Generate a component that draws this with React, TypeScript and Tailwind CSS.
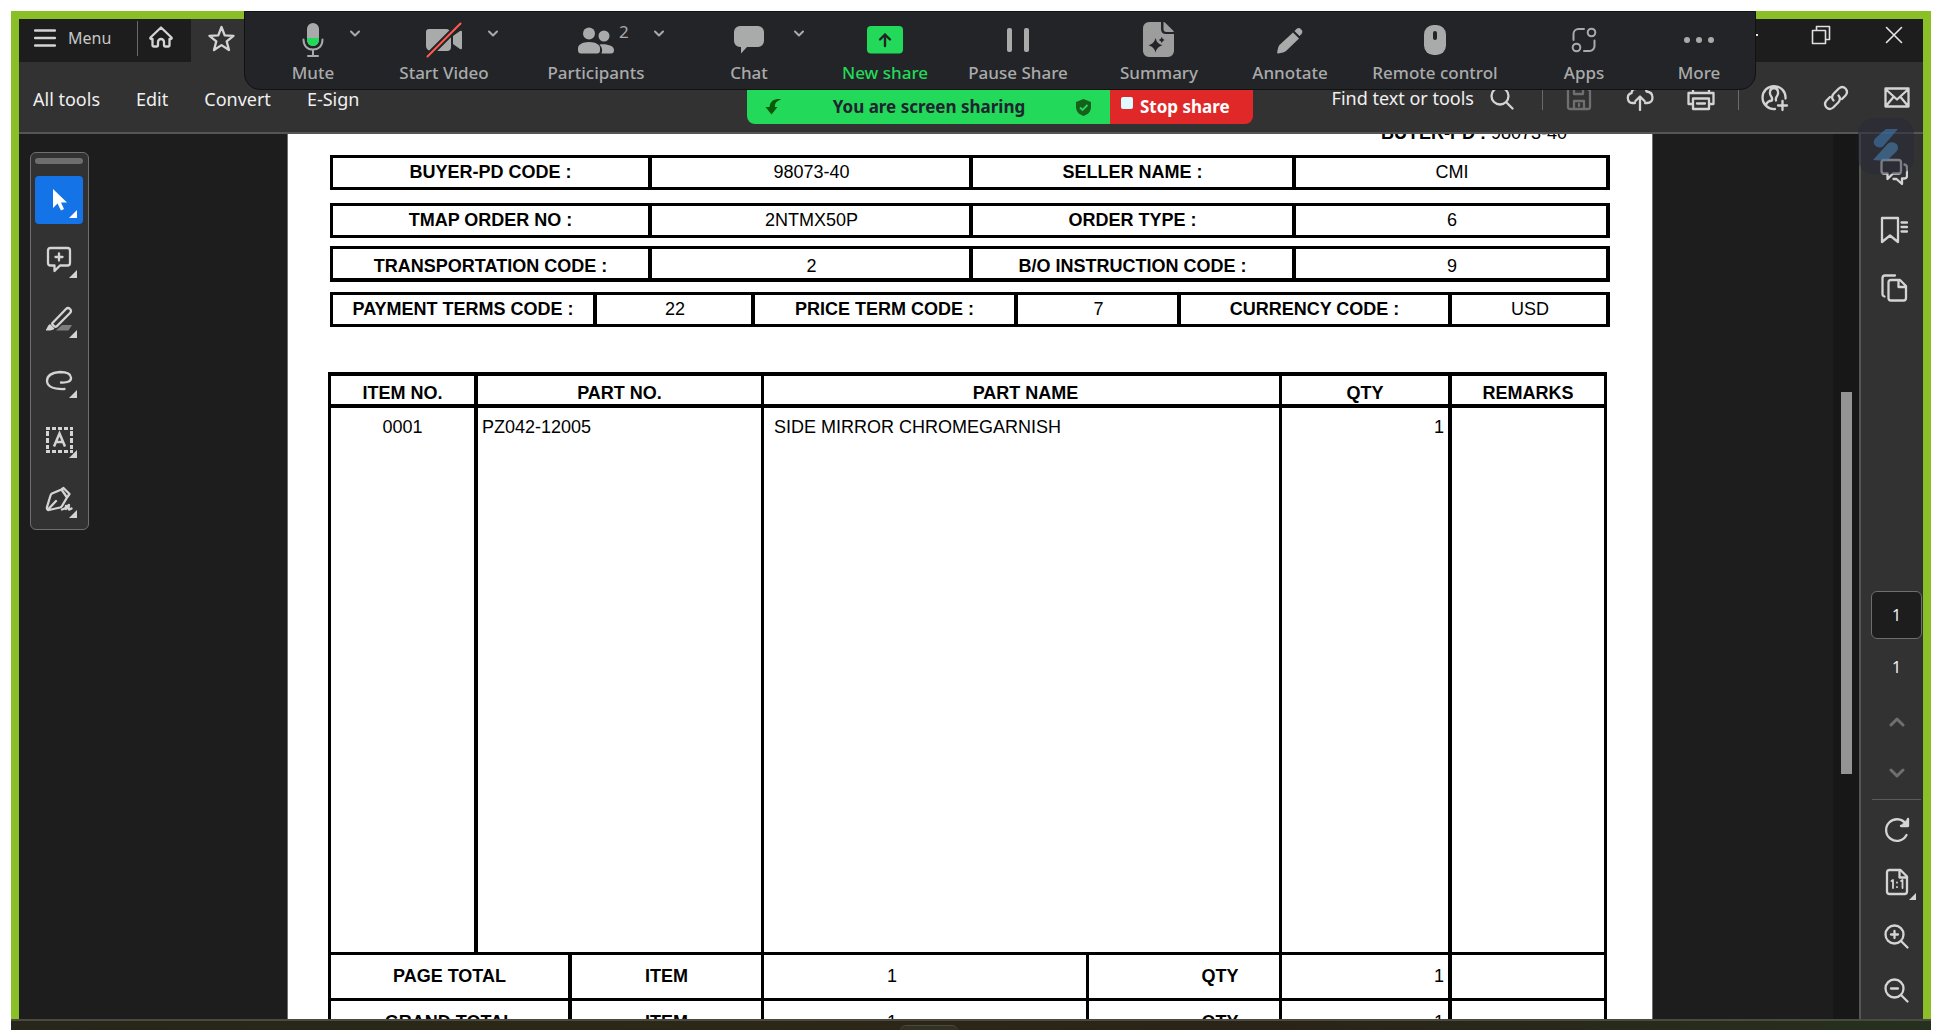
import type { ReactNode } from "react";

const GREY = "#a9abab";
const LIGHT = "#d4d4d4";

function Svg({ w, h, children, className = "" }: { w: number; h: number; children: ReactNode; className?: string }) {
  return (
    <svg width={w} height={h} viewBox={`0 0 ${w} ${h}`} fill="none" className={`block shrink-0 ${className}`} aria-hidden="true">
      {children}
    </svg>
  );
}

function Line({ w, h, children, color = LIGHT, sw = 2.3 }: { w: number; h: number; children: ReactNode; color?: string; sw?: number }) {
  return (
    <Svg w={w} h={h}>
      <g stroke={color} strokeWidth={sw} strokeLinecap="round" strokeLinejoin="round">
        {children}
      </g>
    </Svg>
  );
}

/* ---------- meeting toolbar ---------- */

const MicIcon = () => (
  <Svg w={22} h={36}>
    <rect x="5" y="1" width="12" height="23" rx="6" fill={GREY} />
    <path d="M5 16h12v2a6 6 0 0 1-12 0z" fill="#23d959" />
    <path d="M1.500 17.500c0 6.500 4 10 9.500 10s9.500-3.500 9.500-10M11 27.500V34M6 34h10" stroke={GREY} strokeWidth="2" strokeLinecap="round" />
  </Svg>
);
const VideoIcon = () => (
  <Svg w={38} h={36}>
    <path d="M1 10a3 3 0 0 1 3-3h17a5 5 0 0 1 5 5v13a4 4 0 0 1-4 4H6a5 5 0 0 1-5-5z" fill={GREY} />
    <path d="M28 14l7-5q2-1 2 1v16q0 2-2 1l-7-5z" fill={GREY} />
    <path d="M2 35L36 1" stroke="#232427" strokeWidth="6" />
    <path d="M2.500 34.500L35.500 1.500" stroke="#ff5b50" strokeWidth="2" strokeLinecap="round" />
  </Svg>
);
const PeopleIcon = () => (
  <Svg w={38} h={36}>
    <circle cx="12" cy="11.500" r="6" fill={GREY} />
    <circle cx="27" cy="14" r="5.500" fill={GREY} />
    <path d="M1 26c0-3 4-6 11-6s11 3 11 6v2q0 3.500-3 3.500H4q-3 0-3-3.500z" fill={GREY} />
    <path d="M22.500 22.500c8-.8 14.500 1.500 14.500 5.500q0 3.500-3 3.500h-9.500q2-4.500-2-9z" fill={GREY} />
  </Svg>
);
const ChatIcon = () => (
  <Svg w={30} h={36}>
    <path d="M6 4h18a6 6 0 0 1 6 6v9a6 6 0 0 1-6 6H13l-6 6.500V25H6a6 6 0 0 1-6-6v-9a6 6 0 0 1 6-6z" fill={GREY} />
  </Svg>
);
const ShareIcon = () => (
  <Svg w={36} h={36}>
    <rect y="4" width="36" height="27.500" rx="4" fill="#23d959" />
    <path d="M18 24V12.500M13 17.500l5-5 5 5" stroke="#232427" strokeWidth="2.400" strokeLinecap="round" strokeLinejoin="round" />
  </Svg>
);
const PauseIcon = () => (
  <Svg w={22} h={36}>
    <rect x="0" y="6" width="5" height="24" rx="2" fill={GREY} />
    <rect x="17" y="6" width="5" height="24" rx="2" fill={GREY} />
  </Svg>
);
const SummaryIcon = () => (
  <Svg w={32} h={36}>
    <path d="M6 0h12v7q0 5 5 5h8v17a6 6 0 0 1-6 6H6a6 6 0 0 1-6-6V6a6 6 0 0 1 6-6z" fill="#9d9d9d" />
    <path d="M20.500 0q1 0 2 1l7.500 7.500q1 1 .8 1.500h-7.300q-3 0-3-3z" fill="#9d9d9d" />
    <path d="M12.500 16q1.500 6 7 7.300-5.500 1.200-7 7.200-1.500-6-7-7.200 5.500-1.300 7-7.300zM18.700 15q.8 2.300 3 3-2.200.7-3 3-.8-2.300-3-3 2.200-.7 3-3z" fill="#232427" />
  </Svg>
);
const PencilIcon = () => (
  <Svg w={26} h={36}>
    <path d="M16 10.500l6 6L9 29q-2 1.500-8 2.500-1 0-.8-1Q1 24 3 22.500zM17.500 9l2-2q2.300-2 4.500.2 2.500 2.300.5 4.800l-2 2z" fill={GREY} />
  </Svg>
);
const MouseIcon = () => (
  <Svg w={22} h={36}>
    <rect x="0" y="3" width="22" height="30" rx="9.500" fill={GREY} />
    <rect x="9" y="9" width="4" height="9" rx="2" fill="#232427" />
  </Svg>
);
const AppsIcon = () => (
  <Svg w={26} h={36}>
    <g stroke={GREY} strokeWidth="2" strokeLinecap="round">
      <circle cx="20.500" cy="10.500" r="3.800" />
      <circle cx="5.500" cy="25.500" r="3.800" />
      <path d="M13 7H7.500a5 5 0 0 0-5 5v6M13 29h5.500a5 5 0 0 0 5-5v-5.500" />
    </g>
  </Svg>
);
const MoreIcon = () => (
  <Svg w={30} h={36}>
    <circle cx="3" cy="18" r="3" fill={GREY} />
    <circle cx="15" cy="18" r="3" fill={GREY} />
    <circle cx="27" cy="18" r="3" fill={GREY} />
  </Svg>
);

type Tool = { label: string; icon: ReactNode; caret?: string; count?: string; active?: boolean };
const meetingTools: Tool[] = [
  { label: "Mute", icon: <MicIcon />, caret: "ml-9" },
  { label: "Start Video", icon: <VideoIcon />, caret: "ml-[43px]" },
  { label: "Participants", icon: <PeopleIcon />, caret: "ml-[23px]", count: "2" },
  { label: "Chat", icon: <ChatIcon />, caret: "ml-11" },
  { label: "New share", icon: <ShareIcon />, active: true },
  { label: "Pause Share", icon: <PauseIcon /> },
  { label: "Summary", icon: <SummaryIcon /> },
  { label: "Annotate", icon: <PencilIcon /> },
  { label: "Remote control", icon: <MouseIcon /> },
  { label: "Apps", icon: <AppsIcon /> },
  { label: "More", icon: <MoreIcon /> },
];

function MeetingTool({ label, icon, caret, count, active }: Tool) {
  return (
    <div className="grid min-w-0 grid-cols-2 content-start">
      <button
        className={
          "col-span-2 col-start-1 row-start-1 grid grid-rows-[36px_22px] justify-items-center gap-y-1 text-[17px] leading-[22px] font-medium whitespace-nowrap " +
          (active ? "text-[#23d959]" : "text-[#a9abab]")
        }
      >
        {icon}
        <span>{label}</span>
      </button>
      {caret && (
        <div className={`z-10 col-start-2 row-start-1 flex h-6 items-start gap-6 ${caret}`}>
          {count && <span className="text-[17px] leading-5 text-[#a9abab]">{count}</span>}
          <button aria-label={`${label} options`} className="pt-2">
            <Line w={12} h={8} color={GREY} sw={2}>
              <path d="M2 1.500l4 4 4-4" />
            </Line>
          </button>
        </div>
      )}
    </div>
  );
}

function MeetingBar() {
  return (
    <div className="absolute -top-2 right-[167px] left-[225px] z-20 font-['Noto_Sans',sans-serif]">
      <div className="grid h-[79px] grid-cols-[120fr_142fr_162fr_144fr_128fr_138fr_144fr_118fr_172fr_126fr_104fr] rounded-b-2xl border border-[#111214] bg-[#232427] pt-[10px] pr-1 pl-2">
        {meetingTools.map((t) => (
          <MeetingTool key={t.label} {...t} />
        ))}
      </div>
      <div className="ml-[503px] flex h-[34px] w-[506px] overflow-hidden rounded-b-lg text-[17px] font-bold">
        <div className="flex flex-1 items-center justify-between bg-[#23d959] px-[18px] text-[#1f2430]">
          <Svg w={18} h={18}>
            <path d="M15.500 1C10 .5 5 2.500 4.500 9H.5l6 7.500 6-7.500H10C9.500 6 11.500 2.500 15.500 2z" fill="#0b5a0b" />
          </Svg>
          <span>You are screen sharing</span>
          <Svg w={17} h={19}>
            <path d="M8.500 1l7.500 3v5c0 4.500-3 7.500-7.500 9C4 16.500 1 13.500 1 9V4z" fill="#17601c" />
            <path d="M5 9.500l2.500 2.500L12.500 7" stroke="#23d959" strokeWidth="1.800" />
          </Svg>
        </div>
        <button className="flex w-[143px] items-center bg-[#e02828] pl-[11px] whitespace-nowrap text-white">
          <span className="mr-[7px] mb-2 size-3 rounded-xs bg-[#dffbff]" />
          Stop share
        </button>
      </div>
    </div>
  );
}

/* ---------- PDF reader chrome ---------- */

function TitleBar() {
  return (
    <div className="flex h-[43px] items-stretch bg-[#1d1d1d] text-[#c8c8c8]">
      <button className="flex items-center gap-3 pb-[6px] pl-[15px] text-base">
        <Line w={22} h={20}>
          <path d="M1 2.500h20M1 10h20M1 17.500h20" />
        </Line>
        Menu
      </button>
      <span className="mt-[2px] ml-[26px] h-[35px] w-px bg-[#6a6a6a]" />
      <button aria-label="Home" className="ml-[11px] pb-2">
        <Line w={24} h={22}>
          <path d="M12 1.500L1.500 11.500Q1 12.500 2 13h1.500v6.500q0 1 1 1H8q1 0 1-1V16a3 3 0 0 1 6 0v3.500q0 1 1 1h3.500q1 0 1-1V13H22q1-.5.500-1.500z" />
        </Line>
      </button>
      <div className="ml-[18px] flex w-[300px] items-start bg-[#323232] pt-[6px] pl-[17px]">
        <Line w={27} h={27}>
          <path d="M13.500 2l3.200 8.300 8.800.5-6.800 5.600 2.300 8.600-7.500-4.900L6 25l2.300-8.600L1.500 10.800l8.800-.5z" />
        </Line>
      </div>
      <div className="ml-auto flex items-start pt-[6px] pr-[20px]">
        <button aria-label="Minimize" className="pt-[9px]">
          <span className="block h-[2px] w-[18px] bg-[#e6e6e6]" />
        </button>
        <button aria-label="Restore" className="ml-[53px]">
          <Line w={20} h={20} color="#e0e0e0">
            <path d="M1.500 5.500h13v13h-13zM5.500 5V1.500h13v13H15" strokeWidth="1.600" />
          </Line>
        </button>
        <button aria-label="Close" className="ml-[54px] pt-px">
          <Line w={18} h={18} color="#e6e6e6">
            <path d="M1.500 1.500l15 15M16.500 1.500l-15 15" strokeWidth="1.600" />
          </Line>
        </button>
      </div>
    </div>
  );
}

function AppToolbar() {
  return (
    <div className="flex h-[72px] items-center border-b-2 border-[#555555] bg-[#323232] text-lg text-[#f0f0f0]">
      <nav className="flex gap-9 pt-1 pl-[14px]">
        <button>All tools</button>
        <button>Edit</button>
        <button>Convert</button>
        <button>E-Sign</button>
      </nav>
      <div className="ml-auto flex items-center pr-[13px] pt-px">
        <button className="flex items-center gap-4">
          Find text or tools
          <Line w={24} h={24}>
            <circle cx="10" cy="10" r="8.500" />
            <path d="M16.500 16.500L22.500 22.500" />
          </Line>
        </button>
        <span className="mr-[23px] ml-7 h-6 w-px bg-[#6a6a6a]" />
        <button aria-label="Save" className="mr-[34px]">
          <Line w={26} h={26} color="#6f6f6f">
            <path d="M4 2h16l4 4v16q0 2-2 2H4q-2 0-2-2V4q0-2 2-2zM8 24v-8h10v8M8 2v7h9V2M13 19v2" />
          </Line>
        </button>
        <button aria-label="Upload" className="mr-[33px]">
          <Line w={28} h={26}>
            <path d="M9 18H6.500a5 5 0 0 1-1-9.800Q6 3.500 10 4q1.500-3 5-3 5 .5 5.500 5.500 6 .5 6 6 0 5.500-5.500 5.500h-2M14 25V12M9.500 16l4.500-4.500 4.500 4.500" />
          </Line>
        </button>
        <button aria-label="Print" className="mr-[23px]">
          <Line w={28} h={26}>
            <path d="M6 19H1.500V8h25v11H22M6 8V2h16v6M6 13.500h16V24H6zM10 18.500h8" />
          </Line>
        </button>
        <span className="mr-[22px] h-6 w-px bg-[#6a6a6a]" />
        <button aria-label="Add people" className="mr-[34px]">
          <Line w={28} h={28}>
            <path d="M14 25A11.500 11.500 0 1 1 24.500 14.500M5 21q1-4 6-4.500.5-2-.5-3.500-2-2.500-1.500-5.500.5-3.500 4-3.500t4 3.500q.5 3-1.500 5.500-1 1.500-.5 3.500M21.500 17v9M17 21.500h9" />
          </Line>
        </button>
        <button aria-label="Copy link" className="mr-[35px]">
          <Line w={26} h={26}>
            <path d="M10.500 15.500q-3-3.500.3-7l5-5q3.500-3 6.700 0 3 3.500 0 7L19 14M15.500 10.500q3 3.500-.3 7l-5 5q-3.500 3-6.700 0-3-3.500 0-7L7 12" />
          </Line>
        </button>
        <button aria-label="Send by email">
          <Line w={26} h={22}>
            <path d="M1.500 1.500h23v18h-23zM2 2.500l11 10 11-10M2 19l7.500-9M24 19l-7.500-9" />
          </Line>
        </button>
      </div>
    </div>
  );
}

const Corner = ({ color = LIGHT }: { color?: string }) => (
  <span className="absolute right-[6px] bottom-[6px]">
    <Svg w={8} h={8}>
      <path d="M8 0v8H0z" fill={color} />
    </Svg>
  </span>
);

const sideTools: { name: string; icon: ReactNode }[] = [
  {
    name: "Add comment",
    icon: (
      <Line w={26} h={28}>
        <path d="M4.500 2h17q2.500 0 2.500 2.500v12.500q0 2.500-2.500 2.500H14L8.500 25v-5.500h-4Q2 19.500 2 17V4.500Q2 2 4.500 2zM13 7.500v7M9.500 11h7" />
      </Line>
    ),
  },
  {
    name: "Highlight",
    icon: (
      <Svg w={28} h={28}>
        <path d="M17 19h10l-3.500 5.500H11z" fill="#7d7d7d" />
        <path d="M7.500 17L21 3q2-2 4 0t0 4L11.500 20.500q-1 .5-2 0l-2-2q-.6-.8 0-1.500z" fill="#323232" stroke={LIGHT} strokeWidth="2.300" />
        <path d="M5 18l4.500 4.500q-2 2.500-8.500 2-.5-1 1-2.500Q3 19 5 18z" fill={LIGHT} />
      </Svg>
    ),
  },
  {
    name: "Draw",
    icon: (
      <Line w={28} h={28}>
        <path d="M16 16.500q10.500.5 10-5Q25.500 6 15 6 2 7 2 15q.5 8.500 17.500 8" />
      </Line>
    ),
  },
  {
    name: "Select text box",
    icon: (
      <Svg w={28} h={28}>
        <path d="M1 2.500h27M1 25.500h27" stroke={LIGHT} strokeWidth="3" strokeDasharray="4 2" />
        <path d="M2.500 5v18M26.500 5v18" stroke={LIGHT} strokeWidth="3" strokeDasharray="5 2" />
        <path d="M9 20.500L14.500 7.500 20 20.500M11 16h7" stroke={LIGHT} strokeWidth="2.500" />
      </Svg>
    ),
  },
  {
    name: "Sign",
    icon: (
      <Line w={28} h={28}>
        <path d="M16.500 3.500L7 7.500Q6 8 5.500 9.500L2 21q-.5 3 2 3l11-2.500q1.500-.5 2-1.500l5-8.500zM16.500 3.500l2-1.500 6 6-2.500 3.500M3 23.500l8-8.500M17 23.500q4.500-1 4-3.500M21 23q3-5 3-4-1 5 .5 4.500l2-1" />
      </Line>
    ),
  },
];

function SideTools() {
  return (
    <aside className="w-[268px] shrink-0 pt-[18px] pl-[11px]">
      <div className="w-[59px] rounded-md border border-[#707070] bg-[#323232] py-[5px] pr-[5px] pl-1">
        <div className="h-[6px] rounded-full bg-[#6e6e6e]" />
        <div className="mt-3 flex flex-col items-center gap-3">
          <button aria-label="Select" className="relative flex size-12 items-center justify-center rounded-sm bg-[#1473e6]">
            <Svg w={16} h={24}>
              <path d="M2 1v19l4.500-4.500 3.500 7 3-1.500-3-6.500h6z" fill="#fff" />
            </Svg>
            <Corner color="#fff" />
          </button>
          {sideTools.map((t) => (
            <button key={t.name} aria-label={t.name} className="relative flex size-12 items-center justify-center">
              {t.icon}
              <Corner />
            </button>
          ))}
        </div>
      </div>
    </aside>
  );
}

function RightRail() {
  return (
    <aside className="flex w-16 shrink-0 flex-col items-center border-l-2 border-[#555555] bg-[#323232] pt-6 pb-[15px] pl-1 text-[#f0f0f0]">
      <div className="flex flex-col gap-[30px]">
        <button aria-label="Comments">
          <Line w={28} h={28}>
            <path d="M4 2h14.500q2.500 0 2.500 2.500V13q0 2.500-2.500 2.500H13L7.500 21v-5.500H4Q1.500 15.500 1.500 13V4.500Q1.500 2 4 2zM24.500 6.500q2.500.5 2.500 3V18q0 2.500-2.500 2.500h-2.500V26l-5.500-5h-3" />
          </Line>
        </button>
        <button aria-label="Bookmarks">
          <Line w={28} h={28}>
            <path d="M2 2h16v24l-8-6.500L2 26zM21.500 6.500H27M21.500 11H27M21.500 15.500H27" />
          </Line>
        </button>
        <button aria-label="Pages">
          <Line w={28} h={28}>
            <path d="M15 1.500H5Q2.500 1.500 2.500 4v16q0 2 2 2.500M11 6h9l6 6v12q0 2.500-2.500 2.500H11Q8.500 26.500 8.500 24V8.500Q8.500 6 11 6zM18.500 6v7H26" />
          </Line>
        </button>
      </div>
      <div className="mt-auto flex w-full flex-col items-center pl-[5px]">
        <input
          aria-label="Page number"
          defaultValue="1"
          className="h-12 w-[51px] rounded-md border border-[#6e6e6e] bg-[#1d1d1d] text-center text-base text-[#f0f0f0]"
        />
        <span className="mt-4 text-base">1</span>
        <button aria-label="Previous page" className="mt-[37px]">
          <Line w={16} h={12} color="#6f6f6f" sw={3}>
            <path d="M2 9l6-6 6 6" />
          </Line>
        </button>
        <button aria-label="Next page" className="mt-[39px]">
          <Line w={16} h={12} color="#6f6f6f" sw={3}>
            <path d="M2 3l6 6 6-6" />
          </Line>
        </button>
        <span className="mt-5 h-px w-[49px] bg-[#5a5a5a]" />
        <button aria-label="Rotate" className="mt-[17px]">
          <Line w={26} h={26}>
            <path d="M22.500 18A10.800 10.800 0 1 1 21.500 6.500M24 2v7h-7" />
            <path d="M17 9h7V2z" fill={LIGHT} strokeWidth="1" />
          </Line>
        </button>
        <button aria-label="Actual size" className="relative mt-[25px] flex h-8 w-[38px] justify-center">
          <Line w={24} h={28}>
            <path d="M4.500 2h11l6.500 6.500v15q0 2.500-2.500 2.500h-15Q2 26 2 23.500v-19Q2 2 4.500 2zM14.500 2v7.500H22" />
            <path d="M6.500 13l1.500-1v8M16 13l1.500-1v8M12 14.500v.2M12 19v.2" strokeWidth="1.800" />
          </Line>
          <span className="absolute right-0 bottom-0">
            <Svg w={7} h={7}>
              <path d="M7 0v7H0z" fill={LIGHT} />
            </Svg>
          </span>
        </button>
        <button aria-label="Zoom in" className="mt-6">
          <Line w={26} h={26}>
            <circle cx="10.500" cy="10.500" r="9" />
            <path d="M17.500 17.500l6 6M10.500 7v7M7 10.500h7" />
          </Line>
        </button>
        <button aria-label="Zoom out" className="mt-7">
          <Line w={26} h={26}>
            <circle cx="10.500" cy="10.500" r="9" />
            <path d="M17.500 17.500l6 6M7 10.500h7" />
          </Line>
        </button>
      </div>
    </aside>
  );
}

/* ---------- document ---------- */

function CodeTable({ cells, cols, className = "", cell }: { cells: [string, string][]; cols: string[]; className?: string; cell: string }) {
  return (
    <table className={`w-full table-fixed border-separate border-spacing-0 border-t-3 border-l-3 border-black ${className}`}>
      <colgroup>
        {cols.map((c, i) => (
          <col key={i} className={c} />
        ))}
      </colgroup>
      <tbody>
        <tr>
          {cells.map(([k, v]) => [
            <th key={k} className={`border-black text-center font-bold ${cell}`}>
              {k}
            </th>,
            <td key={v} className={`border-black pl-[2px] text-center ${cell}`}>
              {v}
            </td>,
          ])}
        </tr>
      </tbody>
    </table>
  );
}

const four = ["w-[319px]", "w-[321px]", "w-[323px]", "w-[314px]"];
const six = ["w-[264px]", "w-[158px]", "w-[263px]", "w-[163px]", "w-[271px]", "w-[158px]"];
const tight = "h-8 border-r-4 border-b-3 py-0 pr-0 pb-px leading-5";

function TotalRow({ label }: { label: string }) {
  return (
    <tr className="*:h-[46px] *:border-b-3 *:border-black *:p-0 *:pb-px">
      <th colSpan={2} className="border-r-4">{label}</th>
      <th className="border-r-3">ITEM</th>
      <td className="border-r-3 text-center"><span className="mr-[66px]">1</span></td>
      <th className="border-r-3"><span className="ml-[72px]">QTY</span></th>
      <td className="border-r-4 text-right"><span className="mr-1">1</span></td>
      <td className="border-r-3" />
    </tr>
  );
}

function Document() {
  return (
    <main className="min-w-0 flex-1 overflow-hidden border-x border-[#6e6e6e] bg-white pr-[42px] pl-[40px] font-['Liberation_Sans',Arial,sans-serif] text-lg leading-5 text-black">
      <p className="-mt-[11px] pr-[43px] text-right">
        <strong>BUYER-PD :</strong> 98073-40
      </p>
      <div className="mt-3 pl-[2px]">
        <CodeTable cols={four} cell={tight} cells={[["BUYER-PD CODE :", "98073-40"], ["SELLER NAME :", "CMI"]]} />
        <CodeTable className="mt-[13px]" cols={four} cell={tight} cells={[["TMAP ORDER NO :", "2NTMX50P"], ["ORDER TYPE :", "6"]]} />
        <CodeTable
          className="mt-2"
          cols={four}
          cell="h-[33px] border-r-4 border-b-4 pt-1 pr-0 pb-0 leading-5"
          cells={[["TRANSPORTATION CODE :", "2"], ["B/O INSTRUCTION CODE :", "9"]]}
        />
        <CodeTable
          className="mt-[10px]"
          cols={six}
          cell={tight}
          cells={[["PAYMENT TERMS CODE :", "22"], ["PRICE TERM CODE :", "7"], ["CURRENCY CODE :", "USD"]]}
        />
      </div>
      <div className="mt-[45px] pr-[3px]">
        <table className="w-full table-fixed border-separate border-spacing-0 border-t-4 border-l-3 border-black">
          <colgroup>
            <col className="w-[147px]" />
            <col className="w-[94px]" />
            <col className="w-[192px]" />
            <col className="w-[325px]" />
            <col className="w-[193px]" />
            <col className="w-[170px]" />
            <col className="w-[155px]" />
          </colgroup>
          <thead>
            <tr className="*:h-8 *:border-b-4 *:border-black *:p-0 *:pt-[6px]">
              <th className="border-r-4">ITEM NO.</th>
              <th colSpan={2} className="border-r-3">PART NO.</th>
              <th colSpan={2} className="border-r-3"><span className="ml-2">PART NAME</span></th>
              <th className="border-r-4">QTY</th>
              <th className="border-r-3">REMARKS</th>
            </tr>
          </thead>
          <tbody>
            <tr className="*:h-[547px] *:border-b-3 *:border-black *:pt-[9px] *:align-top">
              <td className="border-r-4 text-center">0001</td>
              <td colSpan={2} className="border-r-3 pl-1">PZ042-12005</td>
              <td colSpan={2} className="border-r-3 pl-[10px]">SIDE MIRROR CHROMEGARNISH</td>
              <td className="border-r-4 pr-1 text-right">1</td>
              <td className="border-r-3" />
            </tr>
            <TotalRow label="PAGE TOTAL" />
            <TotalRow label="GRAND TOTAL" />
          </tbody>
        </table>
      </div>
    </main>
  );
}

export default function App() {
  return (
    <div className="flex h-screen flex-col overflow-hidden bg-white px-[11px] pt-[11px] font-['Noto_Sans',sans-serif]">
      <div className="relative flex min-h-0 flex-1 flex-col border-8 border-b-0 border-[#8bbf26] bg-[#1d1d1d]">
        <TitleBar />
        <AppToolbar />
        <div className="flex min-h-0 flex-1">
          <SideTools />
          <Document />
          <div className="w-[180px] shrink-0" />
          <div className="flex w-[26px] shrink-0 flex-col bg-[#171717] pt-[258px] pl-2">
            <div className="h-[382px] w-[11px] bg-[#949494]" />
          </div>
          <RightRail />
        </div>
        <MeetingBar />
        <div className="absolute top-[99px] right-[9px] flex size-14 justify-center rounded-2xl bg-[#262837]/50 pt-[10px]">
          <Svg w={26} h={34} className="opacity-60">
            <path d="M13 1h12L10 18.500Q5 21 1.500 17q-2-4 1-7z" fill="#3f78b0" />
            <path d="M15 15.500q5-3 9 1 2.500 4-1 7.500l-9.500 9L0 32z" fill="#4a7fae" />
          </Svg>
        </div>
      </div>
      <footer className="flex h-[11px] shrink-0 justify-center border-t-2 border-[#4a4a42] bg-[linear-gradient(90deg,#26261a,#2c2817,#2a2418,#26301f)] pt-1">
        <span className="mr-[84px] h-2 w-[58px] rounded-t-md border-t border-[#4a4a3c] bg-[#333121]" />
      </footer>
    </div>
  );
}
